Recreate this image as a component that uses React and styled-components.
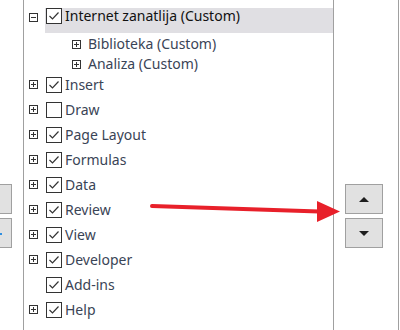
import React from 'react';
import styled, { createGlobalStyle } from 'styled-components';

const Global = createGlobalStyle`
  html, body { margin: 0; padding: 0; background: #fff; }
  body { font-family: "Noto Sans", "Open Sans", sans-serif; }
`;

const Page = styled.div`
  position: relative;
  display: flex;
  width: 400px;
  height: 330px;
  overflow: hidden;
  background: #fff;
`;

const SideCol = styled.div`
  width: ${p => p.$w}px;
  flex-shrink: 0;
  border-right: 1px solid #a0a0a0;
  display: flex;
  flex-direction: column;
  gap: 4px;
  padding-top: 184px;
  padding-left: ${p => p.$pad}px;
  box-sizing: content-box;
`;

const MoveButton = styled.div`
  width: 38px;
  height: 30px;
  box-sizing: border-box;
  margin-left: ${p => p.$offset || 0}px;
  background: #e1e1e1;
  border: 1px solid #a0a0a0;
  display: flex;
  align-items: center;
  justify-content: center;
  position: relative;
`;

const Tri = styled.div`
  width: 0;
  height: 0;
  border-left: 5px solid transparent;
  border-right: 5px solid transparent;
  ${p => p.$down ? 'border-top: 5px solid #1e1e1e;' : 'border-bottom: 5px solid #1e1e1e;'}
`;

const Hint = styled.div`
  position: absolute;
  right: 9px;
  top: 14px;
  width: 3px;
  height: 2px;
  background: #2f8fe0;
`;

const ListPanel = styled.div`
  width: 309px;
  flex-shrink: 0;
  border-right: 1px solid #a0a0a0;
  padding-top: 8px;
`;

const Row = styled.div`
  display: flex;
  align-items: ${p => p.$top ? 'flex-start' : 'center'};
  height: ${p => p.$h || 25}px;
  padding-left: ${p => p.$indent || 5}px;
`;

const Expander = styled.div`
  width: 9px;
  height: 9px;
  box-sizing: border-box;
  border: 1px solid #333;
  position: relative;
  flex-shrink: 0;
  margin-top: ${p => p.$mt || 0}px;
  visibility: ${p => p.$hidden ? 'hidden' : 'visible'};
  &::before {
    content: '';
    position: absolute;
    left: 1px;
    top: 3px;
    width: 5px;
    height: 1px;
    background: #333;
  }
  &::after {
    content: '';
    display: ${p => p.$open ? 'none' : 'block'};
    position: absolute;
    left: 3px;
    top: 1px;
    width: 1px;
    height: 5px;
    background: #333;
  }
`;

const Entry = styled.div`
  flex: 1;
  display: flex;
  align-items: ${p => p.$top ? 'flex-start' : 'center'};
  align-self: stretch;
  margin-left: ${p => p.$gap}px;
  padding-left: ${p => p.$sel ? 1 : 0}px;
  background: ${p => p.$sel ? '#e0dfe3' : 'transparent'};
  ${p => p.$sel ? '' : 'margin-left: ' + (p.$gap + 1) + 'px;'}
`;

const Box = styled.div`
  width: 16px;
  height: 16px;
  box-sizing: border-box;
  border: 1px solid #333;
  background: #fff;
  flex-shrink: 0;
  display: flex;
  align-items: center;
  justify-content: center;
`;

const Label = styled.span`
  font-size: 14px;
  line-height: 16px;
  color: ${p => p.$dark ? '#111' : '#3a4456'};
  margin-left: ${p => p.$ml || 3}px;
  white-space: nowrap;
`;

const SubGroup = styled.div`
  padding-top: 1px;
  margin-bottom: -2px;
`;

const Arrow = styled.svg`
  position: absolute;
  left: 0;
  top: 0;
  pointer-events: none;
`;

const Check = () => (
  <svg width="14" height="14" viewBox="0 0 14 14">
    <polyline points="2.5,7 5.5,10 11.5,3.5" fill="none" stroke="#333" strokeWidth="1.2" />
  </svg>
);

const tabs = [
  { name: 'Insert', checked: true, expand: true },
  { name: 'Draw', checked: false, expand: true },
  { name: 'Page Layout', checked: true, expand: true },
  { name: 'Formulas', checked: true, expand: true },
  { name: 'Data', checked: true, expand: true },
  { name: 'Review', checked: true, expand: true },
  { name: 'View', checked: true, expand: true },
  { name: 'Developer', checked: true, expand: true },
  { name: 'Add-ins', checked: true, expand: false },
  { name: 'Help', checked: true, expand: true },
];

const App = () => (
  <>
    <Global />
    <Page>
      <SideCol $w={23} $pad={0}>
        <MoveButton $offset={-26} />
        <MoveButton $offset={-26}><Hint /></MoveButton>
      </SideCol>

      <ListPanel>
        <Row $top>
          <Expander $open $mt={5} />
          <Entry $sel $top $gap={7}>
            <Box><Check /></Box>
            <Label $dark>Internet zanatlija (Custom)</Label>
          </Entry>
        </Row>
        <SubGroup>
          <Row $h={20} $indent={48}>
            <Expander />
            <Label $ml={7}>Biblioteka (Custom)</Label>
          </Row>
          <Row $h={20} $indent={48}>
            <Expander />
            <Label $ml={7}>Analiza (Custom)</Label>
          </Row>
        </SubGroup>
        {tabs.map(t => (
          <Row key={t.name}>
            <Expander $hidden={!t.expand} />
            <Entry $gap={7}>
              <Box>{t.checked && <Check />}</Box>
              <Label>{t.name}</Label>
            </Entry>
          </Row>
        ))}
      </ListPanel>

      <SideCol $w={53} $pad={11}>
        <MoveButton><Tri /></MoveButton>
        <MoveButton><Tri $down /></MoveButton>
      </SideCol>
    </Page>
    <Arrow width="400" height="330">
      <line x1="152" y1="206" x2="319" y2="211.5" stroke="#e8202a" strokeWidth="4" strokeLinecap="round" />
      <polygon points="317,201 317,222 340,211.5" fill="#e8202a" />
    </Arrow>
  </>
);

export default App;
